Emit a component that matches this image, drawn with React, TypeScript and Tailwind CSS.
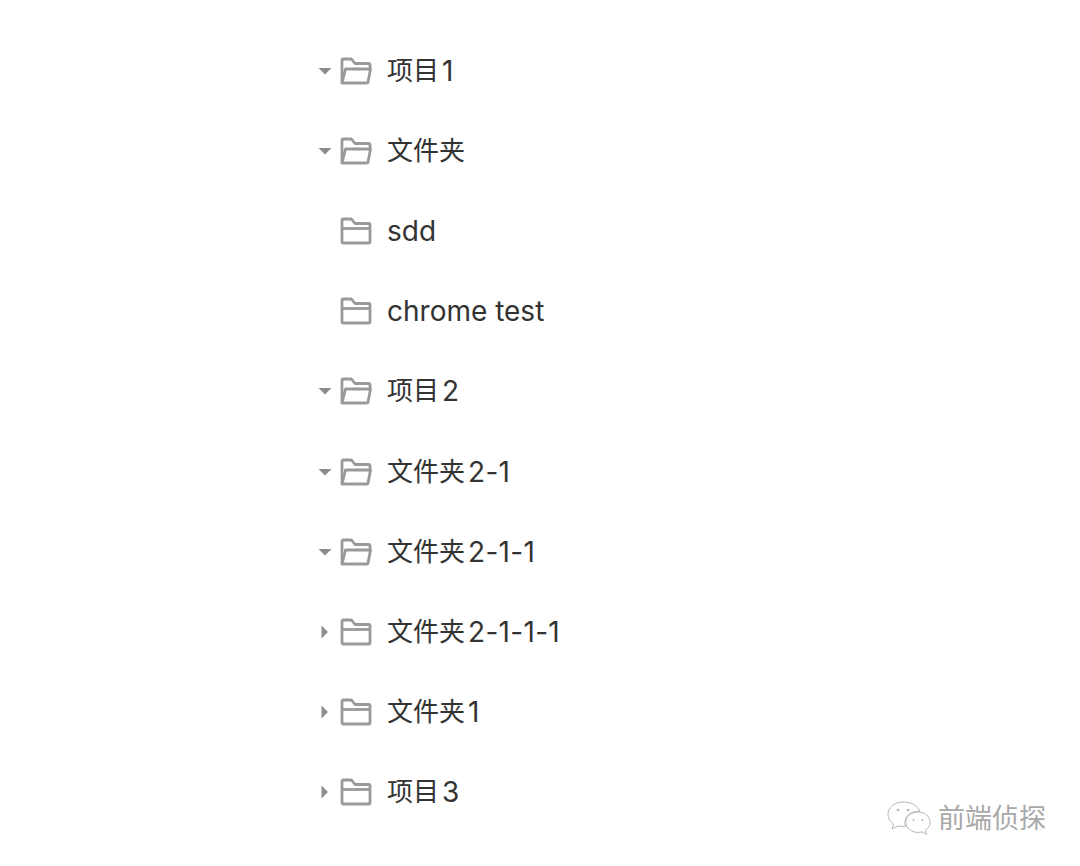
import React from "react";

type Row = { cjk?: string; latin?: string; state: "open" | "closed" | "leaf" };

const rows: Row[] = [
  { cjk: "项目", latin: "1", state: "open" },
  { cjk: "文件夹", state: "open" },
  { latin: "sdd", state: "leaf" },
  { latin: "chrome test", state: "leaf" },
  { cjk: "项目", latin: "2", state: "open" },
  { cjk: "文件夹", latin: "2-1", state: "open" },
  { cjk: "文件夹", latin: "2-1-1", state: "open" },
  { cjk: "文件夹", latin: "2-1-1-1", state: "closed" },
  { cjk: "文件夹", latin: "1", state: "closed" },
  { cjk: "项目", latin: "3", state: "closed" },
];

function Caret({ state }: { state: Row["state"] }) {
  if (state === "leaf") return <span className="w-[14px] h-[14px]" />;
  return (
    <svg width="14" height="14" viewBox="0 0 14 14" fill="#8c8c8c">
      {state === "open" ? <path d="M0.500 4h13L7 10.500z" /> : <path d="M3.500 0.500L10 7l-6.500 6.500z" />}
    </svg>
  );
}

function Folder({ open }: { open: boolean }) {
  return (
    <svg width="32" height="28" viewBox="0 0 32 28" fill="none" stroke="#999999" strokeWidth="2.800" strokeLinejoin="round">
      {open ? (
        <>
          <path d="M2 26V3.200C2 2.500 2.500 2 3.200 2H11.500L15 6.500H28.500C29.500 6.500 30 7 30 8V11" />
          <path d="M2 26L5.500 12H30.500L28 25C27.900 25.600 27.400 26 26.800 26H2Z" />
        </>
      ) : (
        <>
          <path d="M3.200 2H11.500L15 6.500H28.800C29.500 6.500 30 7 30 7.700V24.800C30 25.500 29.500 26 28.800 26H3.200C2.500 26 2 25.500 2 24.800V3.200C2 2.500 2.500 2 3.200 2Z" />
          <path d="M2 11.500H30" />
        </>
      )}
    </svg>
  );
}

function TreeRow({ row }: { row: Row }) {
  return (
    <div className="h-[80.12px] flex items-center">
      <div className="w-[22px] flex justify-start">
        <Caret state={row.state} />
      </div>
      <Folder open={row.state === "open"} />
      <span className="ml-[15px] flex items-center text-[#333333] whitespace-nowrap leading-none">
        {row.cjk && <span className="text-[26px]">{row.cjk}</span>}
        {row.latin && (
          <span className={row.cjk ? "ml-[3px] text-[28px] tracking-[0.3px]" : "text-[28px]"}>{row.latin}</span>
        )}
      </span>
    </div>
  );
}

function Watermark() {
  return (
    <div className="flex items-center gap-[6px]">
      <svg width="46" height="36" viewBox="0 0 46 36" fill="#ffffff" stroke="#b5b5b5" strokeWidth="1">
        <path d="M17 2C8.500 2 2 7.500 2 14.500c0 4 2 7 5.500 9.500L6 29l6-3c1.500.4 3 .6 5 .6 1 0 1.500 0 2.500-.1-.4-1.300-.6-2.500-.6-3.800 0-6.500 6-11.500 13.500-11.500.4 0 1 0 1.500.1C32 5.800 25 2 17 2z" />
        <path d="M32 12c-6.800 0-12.200 4.500-12.200 10.200S25.200 32.400 32 32.400c1.400 0 2.800-.2 4-.6l4.500 2.600-1.200-4.200c3-2 4.700-4.800 4.700-7.800C44 16.500 38.800 12 32 12z" />
        <circle cx="12" cy="10" r="1.300" fill="#b5b5b5" stroke="none" />
        <circle cx="22" cy="10" r="1.300" fill="#b5b5b5" stroke="none" />
        <circle cx="27.500" cy="20" r="1" fill="#b5b5b5" stroke="none" />
        <circle cx="36.500" cy="20" r="1" fill="#b5b5b5" stroke="none" />
      </svg>
      <span className="text-[27px] leading-none text-[#a8a8a8]">前端侦探</span>
    </div>
  );
}

export default function App() {
  return (
    <div
      className="w-[1080px] h-[866px] bg-white overflow-hidden flex flex-col relative"
      style={{ fontFamily: '"Inter", "Noto Sans CJK SC", sans-serif' }}
    >
      <div className="pt-[31px] pl-[318px] flex flex-col">
        {rows.map((row) => (
          <TreeRow key={`${row.cjk ?? ""}${row.latin ?? ""}`} row={row} />
        ))}
      </div>
      <div className="absolute left-[886px] top-[800px]">
        <Watermark />
      </div>
    </div>
  );
}
